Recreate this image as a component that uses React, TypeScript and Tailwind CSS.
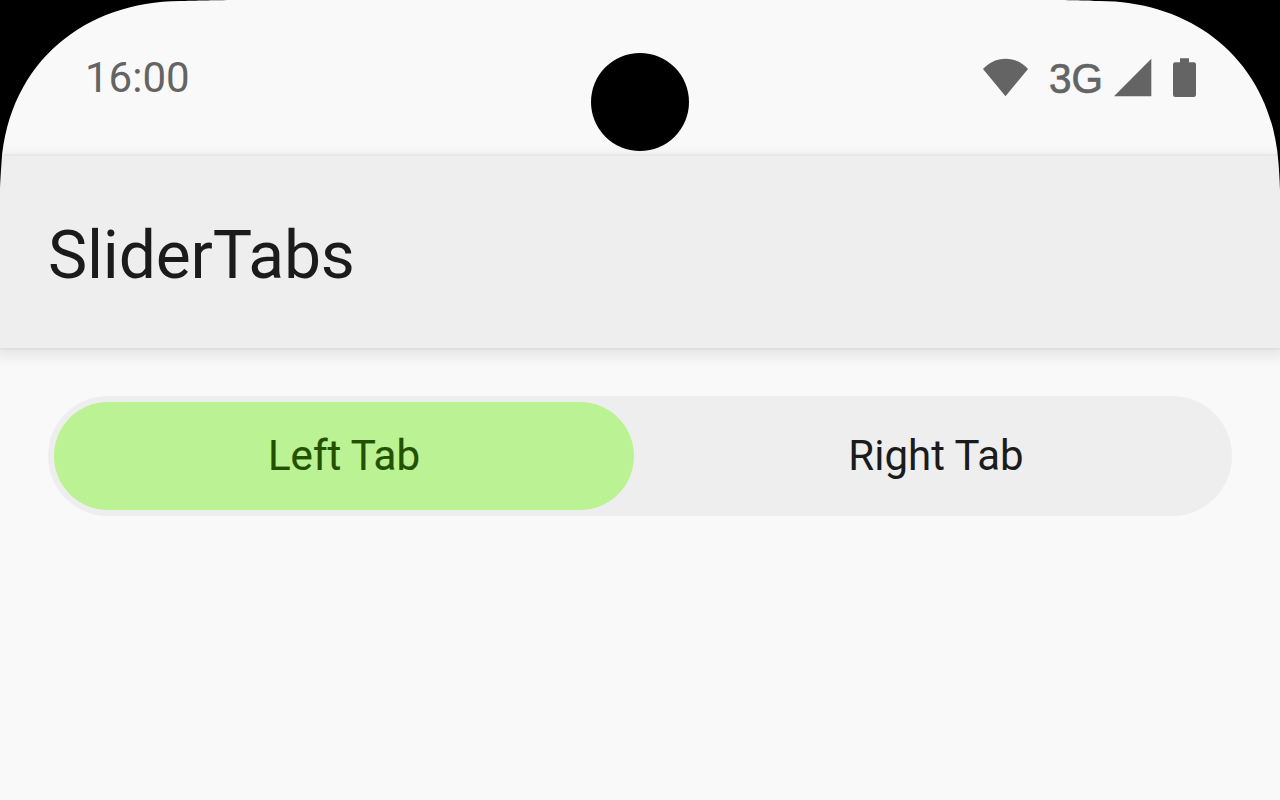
const corner =
  "M0 0H232C205 0.4 195 0.7 180 1C86 1.5 9 61 1.5 163C0.7 174 0.2 182 0 190Z";

function StatusBar() {
  return (
    <header className="flex h-[156px] items-start justify-between bg-[#f9f9f9] pl-[85px] pr-[84px] text-[#646464]">
      <span className="mt-[53px] text-[42px] leading-[49px]">16:00</span>
      <div className="mt-[56px] flex h-[44px] items-start">
        <svg className="mt-[2px] h-[39px] w-[46px]" viewBox="0 0 46 39" fill="currentColor">
          <path d="M0 11C6 4.5 13.5 0.7 22.5 0.7S39 4.5 45 11L22.5 38.2Z" />
        </svg>
        <span className="ml-[20px] mr-[-1px] w-[57px] origin-left scale-x-[0.94] font-['Liberation_Sans',sans-serif] text-[43px] leading-[44px] [-webkit-text-stroke:0.7px_currentColor]">
          3G
        </span>
        <svg className="ml-[9px] mt-[2px] h-[39px] w-[38px]" viewBox="0 0 38 39" fill="currentColor">
          <path d="M0 38.3L37.3 0.8V38.3Z" />
        </svg>
        <svg className="ml-[21px] mt-[2px] h-[40px] w-[23px]" viewBox="0 0 23 40" fill="currentColor">
          <path d="M7 0.2H16V4.2H20.7A2.3 2.3 0 0 1 23 6.5V36.7A2.3 2.3 0 0 1 20.7 39H2.3A2.3 2.3 0 0 1 0 36.7V6.5A2.3 2.3 0 0 1 2.3 4.2H7Z" />
        </svg>
      </div>
    </header>
  );
}

export default function App() {
  return (
    <div className="relative flex h-[800px] w-[1280px] flex-col overflow-hidden bg-[#f9f9f9] font-['Roboto',sans-serif]">
      <StatusBar />
      <div className="relative flex h-[192px] items-center bg-[#eeeeee] pl-[48px] shadow-[0_0_0_2px_rgba(0,0,0,0.03),0_4px_12px_5px_rgba(0,0,0,0.08)]">
        <h1 className="mt-[8px] text-[66px] leading-[84px] tracking-[-0.2px] text-[#1b1b1b]">SliderTabs</h1>
      </div>
      <main className="px-[48px] pt-[48px]">
        <div className="grid h-[120px] grid-cols-2 gap-[12px] rounded-full bg-[#eeeeee] p-[6px] text-[42px] leading-[60px]">
          <button className="rounded-full bg-[#bbf294] text-[#235100] [-webkit-text-stroke:0.2px_currentColor]">Left Tab</button>
          <button className="rounded-full text-[#1b1b1b]">Right Tab</button>
        </div>
      </main>
      <div className="absolute left-[591px] top-[53px] size-[98px] rounded-full bg-black" />
      <svg className="absolute left-0 top-0 h-[190px] w-[232px]" viewBox="0 0 232 190">
        <path d={corner} />
      </svg>
      <svg className="absolute right-0 top-0 h-[190px] w-[232px] -scale-x-100" viewBox="0 0 232 190">
        <path d={corner} />
      </svg>
    </div>
  );
}
